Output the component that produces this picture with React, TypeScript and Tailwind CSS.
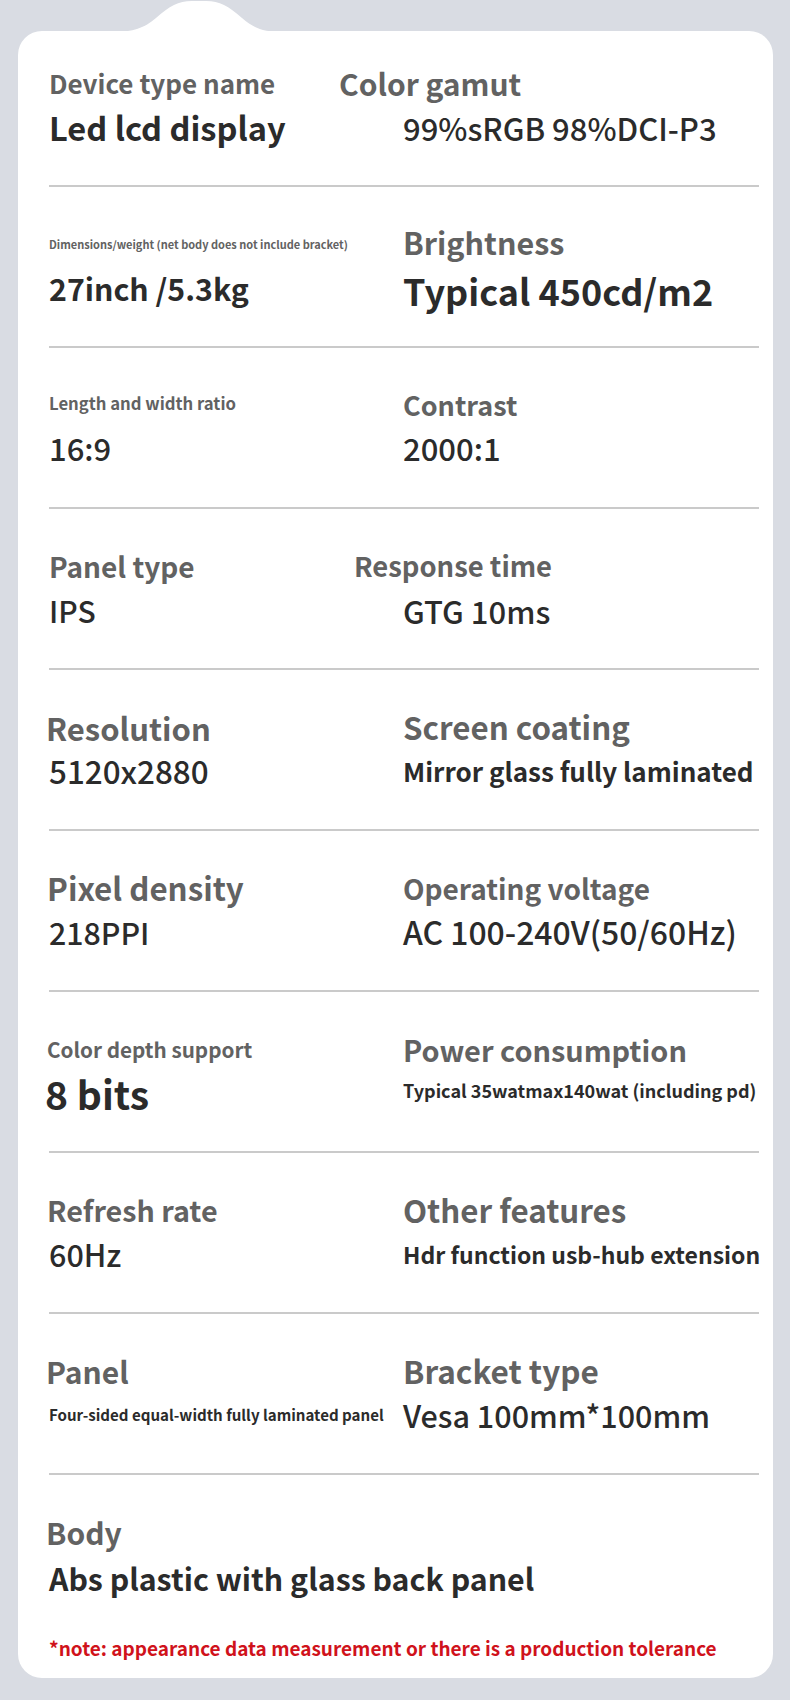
import React from "react";

type Cell = { label: string; value: string; lc: string; vc: string };
type Row = { left: Cell; right: Cell };

const rows: Row[] = [
  {
    left: { label: "Device type name", value: "Led lcd display", lc: "text-[26px]", vc: "text-[32.6px] font-semibold" },
    right: { label: "Color gamut", value: "99%sRGB 98%DCI-P3", lc: "text-[30px] -ml-[64px]", vc: "text-[31px] font-medium" },
  },
  {
    left: { label: "Dimensions/weight (net body does not include bracket)", value: "27inch /5.3kg", lc: "text-[11px]", vc: "text-[30.3px] font-semibold" },
    right: { label: "Brightness", value: "Typical 450cd/m2", lc: "text-[30.5px] pb-[4px]", vc: "text-[36px] font-semibold pt-[4px]" },
  },
  {
    left: { label: "Length and width ratio", value: "16:9", lc: "text-[16.7px] pb-[3px]", vc: "text-[31px] font-medium pb-[3px]" },
    right: { label: "Contrast", value: "2000:1", lc: "text-[27px] pb-[2px]", vc: "text-[31px] font-medium pb-[3px]" },
  },
  {
    left: { label: "Panel type", value: "IPS", lc: "text-[28px]", vc: "text-[30px] font-medium" },
    right: { label: "Response time", value: "GTG 10ms", lc: "text-[27.4px] -ml-[49px]", vc: "text-[31px] font-medium" },
  },
  {
    left: { label: "Resolution", value: "5120x2880", lc: "text-[31px] -ml-[3px]", vc: "text-[31.4px] font-medium" },
    right: { label: "Screen coating", value: "Mirror glass fully laminated", lc: "text-[31.3px]", vc: "text-[26px] font-semibold" },
  },
  {
    left: { label: "Pixel density", value: "218PPI", lc: "text-[31.3px] -ml-[2px]", vc: "text-[30.3px] font-medium" },
    right: { label: "Operating voltage", value: "AC 100-240V(50/60Hz)", lc: "text-[28px]", vc: "text-[31.9px] font-medium" },
  },
  {
    left: { label: "Color depth support", value: "8 bits", lc: "text-[20.7px] -ml-[2px]", vc: "text-[39px] font-semibold -ml-[4px]" },
    right: { label: "Power consumption", value: "Typical 35watmax140wat (including pd)", lc: "text-[28.9px]", vc: "text-[18px] font-semibold pb-[6px]" },
  },
  {
    left: { label: "Refresh rate", value: "60Hz", lc: "text-[28.7px] -ml-[2px]", vc: "text-[30.5px] font-medium" },
    right: { label: "Other features", value: "Hdr function usb-hub extension", lc: "text-[31.3px]", vc: "text-[23px] font-semibold" },
  },
  {
    left: { label: "Panel", value: "Four-sided equal-width fully laminated panel", lc: "text-[30px] -ml-[3px]", vc: "text-[15.1px] font-semibold" },
    right: { label: "Bracket type", value: "Vesa 100mm*100mm", lc: "text-[31.5px]", vc: "text-[30.5px] font-medium" },
  },
];

function Hill() {
  return (
    <svg
      className="absolute left-[94px] -top-[31px]"
      width="172"
      height="32"
      viewBox="0 0 172 32"
      aria-hidden
    >
      <path
        d="M0 32 C 22 32, 32 28, 44 18 C 58 6, 66 1, 80 1 L 94 1 C 108 1, 116 6, 130 18 C 142 28, 150 32, 172 32 Z"
        fill="#ffffff"
      />
    </svg>
  );
}

function CellView({ c }: { c: Cell }) {
  return (
    <div className="flex flex-col">
      <div className="h-[40px] flex items-center">
        <span className={`font-semibold text-[#626262] whitespace-nowrap leading-none ${c.lc}`}>{c.label}</span>
      </div>
      <div className="h-[48px] flex items-center">
        <span className={`text-[#2b2b2b] whitespace-nowrap leading-none ${c.vc}`}>{c.value}</span>
      </div>
    </div>
  );
}

export default function App() {
  return (
    <div
      className="w-[790px] h-[1700px] bg-[#d9dce3] pt-[31px] pl-[18px]"
      style={{ fontFamily: '"Noto Sans CJK SC", "Noto Sans", sans-serif' }}
    >
      <div className="relative w-[755px] h-[1647px] bg-white rounded-[24px] pl-[31px] pr-[14px]">
        <Hill />
        {rows.map((r, i) => (
          <div
            key={i}
            className={`grid grid-cols-[354px_1fr] border-b-2 border-[#cacaca] pb-[34px] ${i === 0 ? "pt-[32px]" : "pt-[37px]"}`}
          >
            <CellView c={r.left} />
            <CellView c={r.right} />
          </div>
        ))}
        <div className="pt-[37px]">
          <div className="h-[40px] flex items-center">
            <span className="font-semibold text-[#626262] text-[30px] leading-none -ml-[3px]">Body</span>
          </div>
          <div className="h-[52px] flex items-center">
            <span className="font-semibold text-[#2b2b2b] text-[30.3px] leading-none">Abs plastic with glass back panel</span>
          </div>
          <div className="mt-[28px] h-[30px] flex items-center">
            <span className="font-semibold text-[#d0121b] text-[19px] leading-none">
              *note: appearance data measurement or there is a production tolerance
            </span>
          </div>
        </div>
      </div>
    </div>
  );
}
